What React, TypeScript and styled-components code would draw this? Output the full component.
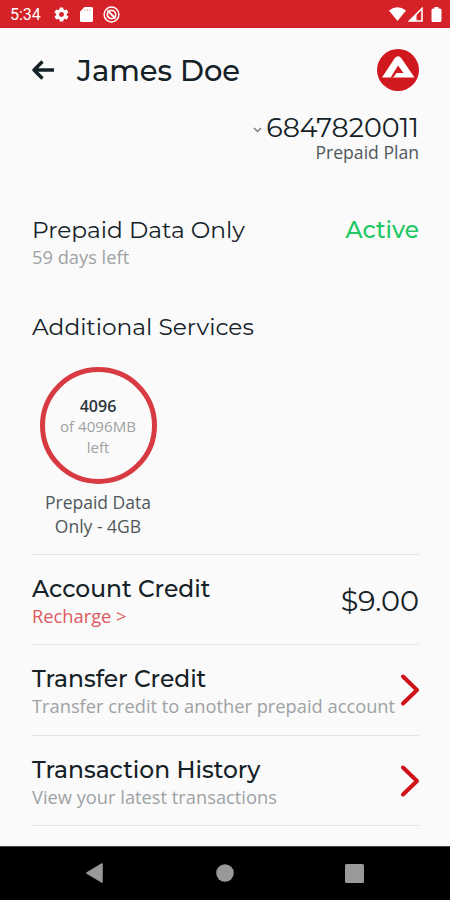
import React from 'react';
import styled, { createGlobalStyle } from 'styled-components';

const GlobalStyle = createGlobalStyle`
  * { box-sizing: border-box; }
  body { margin: 0; background: #fafafa; }
`;

const heading = `'Montserrat', 'Inter', sans-serif`;
const ink = '#142127';

const Screen = styled.div`
  display: flex;
  flex-direction: column;
  width: 450px;
  height: 900px;
  overflow: hidden;
  background: #fafafa;
  color: ${ink};
  font-family: 'Open Sans', 'Noto Sans', sans-serif;
  white-space: nowrap;
`;

const StatusBar = styled.header`
  display: flex;
  align-items: center;
  justify-content: space-between;
  height: 28px;
  flex: none;
  padding: 1px 7px 0 10px;
  background: #d52128;
  border-bottom: 1px solid #c71f26;
  color: #fff;
`;

const StatusGroup = styled.div<{ $gap: number }>`
  display: flex;
  align-items: center;
  gap: ${({ $gap }) => $gap}px;
  svg { display: block; }
`;

const Clock = styled.time`
  width: 32px;
  margin-right: 1px;
  padding-top: 1px;
  font: 400 16px/20px Roboto, sans-serif;
`;

const Content = styled.main`
  flex: 1;
  padding: 0 31px 0 32px;
`;

const TitleRow = styled.div`
  display: flex;
  align-items: center;
  height: 86px;
  padding-bottom: 2px;
  svg { display: block; }
`;

const Name = styled.h1`
  flex: 1;
  margin: 0 0 0 22px;
  padding-top: 2px;
  font: 500 29px/34px ${heading};
`;

const PhoneBlock = styled.section`
  display: flex;
  flex-direction: column;
  align-items: flex-end;
  height: 102px;
`;

const Phone = styled.div`
  display: flex;
  align-items: center;
  gap: 4px;
  font: 400 26.9px/28px ${heading};
  svg { margin-top: 3px; }
`;

const Plan = styled.div`
  font-size: 17.6px;
  line-height: 20px;
  color: #4f575b;
`;

const Row = styled.div`
  display: flex;
  justify-content: space-between;
`;

const SectionTitle = styled.h2`
  margin: 0;
  font: 400 23.3px/28px ${heading};
`;

const Status = styled.div`
  font: 500 23.3px/28px ${heading};
  color: #20c762;
`;

const Sub = styled.div<{ $accent?: boolean }>`
  font-size: 18.3px;
  line-height: 25px;
  color: ${({ $accent }) => ($accent ? '#dc5960' : '#9ea2a4')};
`;

const Services = styled.section`
  margin-top: 44px;
`;

const Service = styled.div`
  width: 132px;
  margin-top: 26px;
  display: flex;
  flex-direction: column;
  align-items: center;
  text-align: center;
`;

const Ring = styled.div`
  display: flex;
  flex-direction: column;
  align-items: center;
  justify-content: center;
  width: 117px;
  height: 117px;
  padding-top: 2px;
  border: 5.5px solid #d83a41;
  border-radius: 50%;
  font-size: 15.1px;
  line-height: 20.5px;
  color: #9ea2a4;
  strong { font-size: 16px; font-weight: 600; color: #2a353a; }
`;

const ServiceName = styled.div`
  margin-top: 7px;
  height: 62.5px;
  font-size: 17.5px;
  line-height: 23.5px;
  color: #4f575b;
`;

const Item = styled.section`
  display: flex;
  align-items: center;
  justify-content: space-between;
  height: 90.5px;
  padding-top: 3px;
  border-top: 1px solid #e3e3e3;
  &:last-child { border-bottom: 1px solid #e3e3e3; height: 91.5px; }
  svg { display: block; margin: -2px -1px 0 0; flex: none; }
`;

const ItemText = styled.div`
  width: 360px;
`;

const ItemTitle = styled.h3`
  margin: 0;
  font: 500 23.4px/29px ${heading};
`;

const Amount = styled.div`
  font: 400 28.7px/34px ${heading};
`;

const NavBar = styled.nav`
  display: flex;
  align-items: center;
  justify-content: space-between;
  flex: none;
  height: 54px;
  padding: 0 86px 1px 86px;
  background: #000;
  border-top: 1px solid #444;
`;

const Chevron = () => (
  <svg width="20" height="34" viewBox="0 0 20 34" fill="none" stroke="#cf1218" strokeWidth="4" strokeLinecap="round" strokeLinejoin="round">
    <path d="M3 3.5 17 17 3 30.5" />
  </svg>
);

const Gear = () => (
  <svg width="17" height="17" viewBox="0 0 24 24" fill="#fff">
    <path d="M19.4 13a7.8 7.8 0 0 0 0-2l2.1-1.600a.5.5 0 0 0 .1-.6l-2-3.500a.5.5 0 0 0-.6-.2l-2.500 1a7.500 7.500 0 0 0-1.700-1L14.400 2.400a.5.5 0 0 0-.5-.4h-4a.5.5 0 0 0-.5.400L9 5.100a7.500 7.500 0 0 0-1.700 1l-2.500-1a.5.5 0 0 0-.6.200l-2 3.500a.5.5 0 0 0 .1.600L4.500 11a8 8 0 0 0 0 2l-2.100 1.600a.5.5 0 0 0-.1.600l2 3.500c.1.200.4.300.6.200l2.500-1a7.500 7.500 0 0 0 1.700 1l.4 2.700c0 .2.200.4.500.4h4c.2 0 .5-.2.500-.4l.4-2.700a7.500 7.500 0 0 0 1.700-1l2.500 1c.2.100.5 0 .6-.2l2-3.500a.5.5 0 0 0-.1-.6zM12 15.500a3.500 3.500 0 1 1 0-7 3.500 3.500 0 0 1 0 7z" />
  </svg>
);

const SdCard = () => (
  <svg width="13" height="15" viewBox="0 0 13 15">
    <path d="M4.5 0h7A1.5 1.5 0 0 1 13 1.5v12a1.5 1.5 0 0 1-1.5 1.5h-10A1.5 1.5 0 0 1 0 13.5v-9z" fill="#fff" />
    <path d="M5 2v2M7.500 2v2M10 2v2" stroke="#f0b0b3" strokeWidth="1" />
  </svg>
);

const Blocked = () => (
  <svg width="17" height="17" viewBox="0 0 17 17" fill="none" stroke="#fff">
    <circle cx="8.5" cy="8.5" r="7.4" strokeWidth="1.5" />
    <circle cx="8.5" cy="8.5" r="4.2" strokeWidth="1.7" />
    <path d="M4.500 4.500 12.500 12.500" strokeWidth="2" />
  </svg>
);

const Logo = () => (
  <svg width="42" height="42" viewBox="0 0 42 42">
    <circle cx="21" cy="21" r="21" fill="#d0181f" />
    <path d="M5 28.500 17.500 9.500Q21 5 24.500 9.500L37.500 28.500Z" fill="#fff" />
    <path d="M13.500 28.700 21 16.500 26.500 24H19.500L16 28.700Z" fill="#d0181f" />
  </svg>
);

export default function App() {
  return (
    <>
      <GlobalStyle />
      <Screen>
        <StatusBar>
          <StatusGroup $gap={10}>
            <Clock>5:34</Clock>
            <Gear />
            <SdCard />
            <Blocked />
          </StatusGroup>
          <StatusGroup $gap={2}>
            <svg width="17" height="14" viewBox="0 0 17 14"><path d="M0 3.500Q8.500-3 17 3.500L8.500 14Z" fill="#fff" /></svg>
            <svg width="15" height="15" viewBox="0 0 15 15">
              <path d="M14 1.500V14H1.500Z" fill="none" stroke="#fff" strokeWidth="1.600" />
              <path d="M8.500 7v7H1.500Z" fill="#fff" />
            </svg>
            <svg width="18" height="15" viewBox="0 0 18 15"><path d="M9.500 0h4v1.500H15a1.500 1.500 0 0 1 1.500 1.500v10.500A1.500 1.500 0 0 1 15 15H8a1.500 1.500 0 0 1-1.500-1.500V3A1.500 1.500 0 0 1 8 1.500h1.500z" fill="#fff" /></svg>
          </StatusGroup>
        </StatusBar>
        <Content>
          <TitleRow>
            <svg width="23" height="20" viewBox="0 0 23 20" fill="none" stroke={ink} strokeWidth="3.4" strokeLinejoin="round">
              <path d="M22 10H2.500M10.500 1.500 2 10 10.500 18.500" />
            </svg>
            <Name>James Doe</Name>
            <Logo />
          </TitleRow>
          <PhoneBlock>
            <Phone>
              <svg width="9" height="6" viewBox="0 0 9 6" fill="none" stroke="#777d80" strokeWidth="1.5"><path d="M1 1 4.500 4.500 8 1" /></svg>
              6847820011
            </Phone>
            <Plan>Prepaid Plan</Plan>
          </PhoneBlock>
          <Row>
            <SectionTitle>Prepaid Data Only</SectionTitle>
            <Status>Active</Status>
          </Row>
          <Sub>59 days left</Sub>
          <Services>
            <SectionTitle>Additional Services</SectionTitle>
            <Service>
              <Ring>
                <strong>4096</strong>
                <span>of 4096MB</span>
                <span>left</span>
              </Ring>
              <ServiceName>Prepaid Data<br />Only - 4GB</ServiceName>
            </Service>
          </Services>
          <div>
            <Item>
              <div>
                <ItemTitle>Account Credit</ItemTitle>
                <Sub $accent>Recharge &gt;</Sub>
              </div>
              <Amount>$9.00</Amount>
            </Item>
            <Item>
              <ItemText>
                <ItemTitle>Transfer Credit</ItemTitle>
                <Sub>Transfer credit to another prepaid account</Sub>
              </ItemText>
              <Chevron />
            </Item>
            <Item>
              <ItemText>
                <ItemTitle>Transaction History</ItemTitle>
                <Sub>View your latest transactions</Sub>
              </ItemText>
              <Chevron />
            </Item>
          </div>
        </Content>
        <NavBar>
          <svg width="18" height="20" viewBox="0 0 18 20"><path d="M16 1 1 10 16 19Z" fill="#999" stroke="#999" strokeWidth="1.5" strokeLinejoin="round" /></svg>
          <svg width="18" height="18" viewBox="0 0 18 18"><circle cx="9" cy="9" r="8.8" fill="#999" /></svg>
          <svg width="19" height="19" viewBox="0 0 19 19"><rect width="19" height="19" rx="1.5" fill="#999" /></svg>
        </NavBar>
      </Screen>
    </>
  );
}
